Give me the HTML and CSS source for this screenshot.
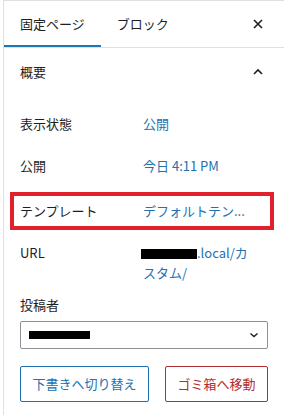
FILE: index.html
```html
<!DOCTYPE html>
<html>
<head>
    <meta charset="utf-8">
    <title>固定ページ設定</title>
    <link rel="stylesheet" href="styles.css">
</head>
<body>
    <div class="sidebar">
        <div class="tabs">
            <div class="tab active">固定ページ</div>
            <div class="tab">ブロック</div>
            <div class="close">
                <svg width="12" height="12" viewBox="0 0 12 12"><path d="M2 2 L10 10 M10 2 L2 10" stroke="#1e1e1e" stroke-width="1.6" fill="none"/></svg>
            </div>
        </div>

        <div class="panel-header">
            <span>概要</span>
            <svg width="12" height="8" viewBox="0 0 12 8"><path d="M2 6 L6 2 L10 6" stroke="#1e1e1e" stroke-width="1.6" fill="none"/></svg>
        </div>

        <div class="panel-body">
            <div class="row">
                <div class="label">表示状態</div>
                <div class="value">公開</div>
            </div>
            <div class="row">
                <div class="label">公開</div>
                <div class="value">今日 4:11 PM</div>
            </div>
            <div class="row highlight">
                <div class="label">テンプレート</div>
                <div class="value">デフォルトテン...</div>
            </div>
            <div class="row url-row">
                <div class="label">URL</div>
                <div class="value url"><span class="redact"></span>.local/カスタム/</div>
            </div>

            <div class="author-label">投稿者</div>
            <div class="select">
                <span class="redact wide"></span>
                <svg width="10" height="6" viewBox="0 0 10 6"><path d="M1.5 1.5 L5 4.5 L8.5 1.5" stroke="#1e1e1e" stroke-width="1.4" fill="none"/></svg>
            </div>

            <div class="actions">
                <div class="btn blue">下書きへ切り替え</div>
                <div class="btn red">ゴミ箱へ移動</div>
            </div>
        </div>
    </div>
</body>
</html>
```

FILE: styles.css
```css
body {
    margin: 0;
    font-family: "Noto Sans CJK JP", "Noto Sans", sans-serif;
    font-size: 13px;
    line-height: 20px;
    color: #1e1e1e;
    background: #fff;
}

.sidebar {
    margin-left: 3px;
    border-left: 1px solid #e0e0e0;
    border-top: 1px solid #e0e0e0;
    height: 414px;
}

.tabs {
    display: flex;
    height: 46px;
    border-bottom: 1px solid #e0e0e0;
}

.tab {
    display: flex;
    align-items: center;
    padding: 0 16px;
}

.tab.active {
    box-shadow: inset 0 -2px 0 #1f76b6;
}

.close {
    margin-left: auto;
    width: 48px;
    display: flex;
    align-items: center;
    justify-content: center;
    padding-right: 2px;
}

.panel-header {
    height: 48px;
    display: flex;
    align-items: center;
    justify-content: space-between;
    padding: 0 20px 0 16px;
}

.panel-body {
    padding: 12px 16px 0 16px;
}

.row {
    display: flex;
    align-items: center;
    min-height: 32px;
    margin-bottom: 10px;
}

.label {
    width: 123px;
    flex-shrink: 0;
}

.value {
    color: #2271b1;
    white-space: nowrap;
}

.highlight {
    margin: 0 -6px 0 -10px;
    padding-left: 6px;
    border: 4px solid #e0202b;
    min-height: 30px;
}

.url-row {
    align-items: flex-start;
    margin-top: 13px;
    margin-bottom: 12px;
}

.url {
    width: 106px;
    white-space: normal;
    word-break: break-all;
}

.redact {
    display: inline-block;
    width: 56px;
    height: 10px;
    background: #000;
    margin-left: -2px;
    vertical-align: -1px;
}

.redact.wide {
    width: 61px;
    height: 8px;
    margin-left: 0;
}

.author-label {
    margin-bottom: 6px;
}

.select {
    height: 26px;
    border: 1px solid #8c8f94;
    border-radius: 2px;
    display: flex;
    align-items: center;
    justify-content: space-between;
    padding: 0 8px 0 8px;
}

.actions {
    display: flex;
    gap: 16px;
    margin-top: 17px;
}

.btn {
    flex: none;
    box-sizing: border-box;
    height: 36px;
    display: flex;
    align-items: center;
    justify-content: center;
    white-space: nowrap;
    border-radius: 2px;
    border: 1px solid;
}

.btn.blue {
    width: 129px;
    color: #2271b1;
    border-color: #2271b1;
}

.btn.red {
    width: 103px;
    color: #b32d2e;
    border-color: #b32d2e;
}
```
